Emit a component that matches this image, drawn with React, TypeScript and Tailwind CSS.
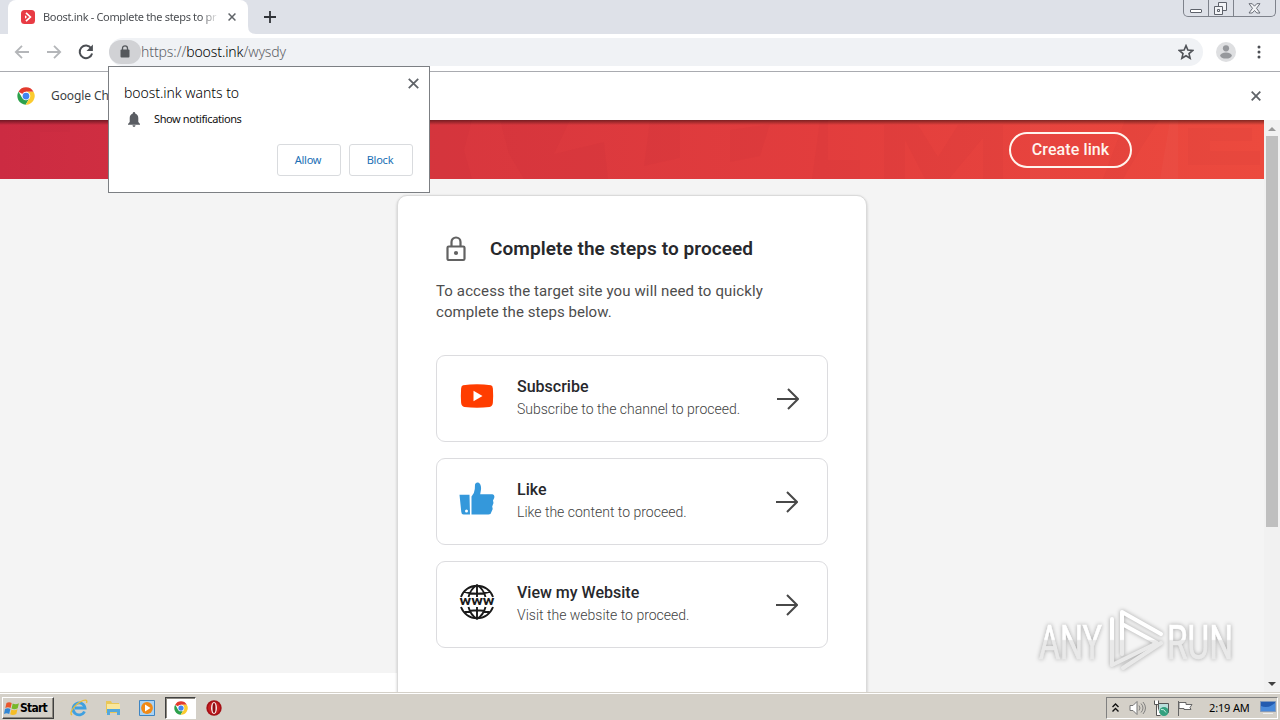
import React from "react";

const ui = "font-['Noto_Sans','Open_Sans',sans-serif]";

function ChromeLogo({ size }: { size: number }) {
  return (
    <svg width={size} height={size} viewBox="0 0 48 48" className="shrink-0">
      <circle cx="24" cy="24" r="23" fill="#fff" />
      <path d="M24 24 L4 12.5 A23 23 0 0 1 44 12.5 L24 12.5Z" fill="#e33b2e" />
      <path d="M4 12.5 A23 23 0 0 0 23 47 L33.5 29.5 L24 24 L14 29Z" fill="#2da14c" />
      <path d="M44 12.5 A23 23 0 0 1 23 47 L34 29 L33 18 L24 12.5Z" fill="#fbcb2f" />
      <circle cx="24" cy="24" r="11.5" fill="#fff" />
      <circle cx="24" cy="24" r="9" fill="#4286f0" />
    </svg>
  );
}

function Cross({ size, color = "#5f6368", width = 2 }: { size: number; color?: string; width?: number }) {
  return (
    <svg width={size} height={size} viewBox="0 0 10 10" stroke={color} strokeWidth={width} className="block shrink-0">
      <path d="M.7 .7 9.3 9.3M9.3 .7 .7 9.3" />
    </svg>
  );
}

function TabStrip() {
  return (
    <div className="flex h-[34px] shrink-0 bg-[#dee1e8]">
      <div className="ml-2 flex h-[34px] w-[240px] items-center rounded-t-lg bg-white pl-[13px]">
        <svg width="14" height="14" viewBox="0 0 14 14" className="shrink-0">
          <rect width="14" height="14" rx="3.5" fill="#e83b44" />
          <path d="M5 2.8 9.4 7 5 11.2" fill="none" stroke="#fff" strokeWidth="1.7" />
          <path d="M4 5.3 6 7 4 8.8Z" fill="#fff" />
        </svg>
        <div className={`${ui} ml-2 w-[176px] shrink-0 whitespace-nowrap text-[11px] leading-4 tracking-[-0.33px] text-[#4b4e52] [mask-image:linear-gradient(to_right,black_158px,transparent_176px)]`}>
          Boost.ink - Complete the steps to pr
        </div>
        <div className="ml-[9px]"><Cross size={8} width={1.9} /></div>
      </div>
      <svg width="8" height="34" viewBox="0 0 8 34" className="shrink-0"><path d="M0 26 Q0 34 8 34 H0Z" fill="#fff" /></svg>
      <svg width="12" height="12" viewBox="0 0 12 12" className="ml-2 mt-[11px] shrink-0"><path d="M6 0V12M0 6H12" stroke="#303338" strokeWidth="1.8" /></svg>
      <div className="ml-auto mr-1 flex h-[17px] w-[93px] rounded-b-[5px] border border-t-0 border-[#7e828b]">
        <div className="flex w-[25px] items-end justify-center border-r border-[#7e828b] pb-[3px]">
          <div className="h-1 w-3 rounded-[1px] border border-[#5e626b] bg-white" />
        </div>
        <div className="flex w-[25px] items-center justify-center border-r border-[#7e828b]">
          <svg width="13" height="13" viewBox="0 0 13 13" fill="#f3f4f7" stroke="#5e626b" className="-ml-0.5"><path d="M4.5 .5h8v8h-8z" /><path d="M.5 4.5h8v8h-8zM3.5 7.5h2v2h-2z" /></svg>
        </div>
        <div className="flex flex-1 items-center justify-center">
          <svg width="13" height="11" viewBox="0 0 13 11" fill="#f3f4f7" stroke="#5e626b" strokeWidth=".9"><path d="M1 .7h3.2l2.3 2.5L8.8.7H12L8.5 5.3 12 10H8.8L6.500 7.500 4.200 10H1l3.500-4.700Z" /></svg>
        </div>
      </div>
    </div>
  );
}

function Toolbar() {
  return (
    <div className="flex h-[38px] shrink-0 items-center border-b border-[#a9abb0] bg-white pb-[2px]">
      <svg width="16" height="14" viewBox="0 0 16 14" fill="none" stroke="#b4b6b9" strokeWidth="1.8" className="ml-[14px]"><path d="M15 7H2M8 .8 1.800 7 8 13.200" /></svg>
      <svg width="16" height="14" viewBox="0 0 16 14" fill="none" stroke="#b4b6b9" strokeWidth="1.8" className="ml-4"><path d="M1 7H14M8 .8 14.200 7 8 13.200" /></svg>
      <svg width="16" height="16" viewBox="0 0 16 16" className="ml-4"><path d="M13.200 4.300A6.300 6.300 0 1 0 14.100 9.500" fill="none" stroke="#4b4e53" strokeWidth="2" /><path d="M14.900 .6V7H8.500Z" fill="#4b4e53" /></svg>
      <div className="ml-[15px] flex h-[28px] w-[1094px] items-center rounded-full bg-[#f0f2f5]">
        <div className="flex h-6 w-8 items-center justify-center rounded-full bg-[#d1d2d5]">
          <svg width="10" height="13" viewBox="0 0 10 13"><path d="M2.500 5V3.300a2.500 2.500 0 0 1 5 0V5" fill="none" stroke="#55585c" strokeWidth="1.300" /><rect x=".5" y="4.500" width="9" height="8" rx="1" fill="#55585c" /></svg>
        </div>
        <div className={`${ui} whitespace-nowrap text-[14px] font-light leading-5 tracking-[-0.1px] text-[#5d6166]`}>
          https://<span className="text-black">boost.ink</span>/wysdy
        </div>
        <svg width="16" height="16" viewBox="0 0 24 24" fill="none" stroke="#505358" strokeWidth="2.400" className="ml-auto mr-[9px]"><path d="m12 2.500 2.800 6.600 7.200.6-5.500 4.700 1.700 7-6.200-3.700-6.200 3.700 1.700-7L2 9.700l7.200-.6Z" /></svg>
      </div>
      <svg width="20" height="20" viewBox="0 0 20 20" className="ml-[13px]"><circle cx="10" cy="10" r="10" fill="#dedfe1" /><circle cx="10" cy="6.300" r="3.100" fill="#96989c" /><ellipse cx="10" cy="13.600" rx="5.800" ry="3" fill="#96989c" /></svg>
      <svg width="4" height="14" viewBox="0 0 4 14" fill="#4c4f54" className="ml-[21px]"><circle cx="2" cy="2" r="1.500" /><circle cx="2" cy="7" r="1.500" /><circle cx="2" cy="12" r="1.500" /></svg>
    </div>
  );
}

function InfoBar() {
  return (
    <div className="flex h-12 shrink-0 items-center bg-white pl-[17px] pr-[19px]">
      <ChromeLogo size={18} />
      <div className={`${ui} ml-4 whitespace-nowrap text-[12px] tracking-[-0.1px] text-[#3c3f43]`}>Google Ch</div>
      <div className="ml-auto"><Cross size={10} width={1.800} /></div>
    </div>
  );
}

function PermissionPopup() {
  const button = "flex h-8 w-16 items-center justify-center rounded-[3px] border border-[#d9dbde] pr-[2px] text-[11px] tracking-[-0.25px] text-[#1a6fb5]";
  return (
    <div className={`${ui} absolute left-[108px] top-[66px] z-10 flex h-[127px] w-[322px] flex-col border border-[#7c7f83] bg-white pl-[15px] pr-4`}>
      <div className="flex items-start justify-between">
        <div className="mt-4 whitespace-nowrap text-[14px] font-light leading-5 tracking-[-0.05px] text-black">boost.ink wants to</div>
        <div className="-mr-[6px] mt-[11px]"><Cross size={11} width={1.600} /></div>
      </div>
      <div className="mt-[7px] flex items-center pl-1">
        <svg width="12" height="15" viewBox="0 0 12 15" fill="#5a5d63"><path d="M6 0c.8 0 1.200.6 1.200 1.400C9.300 2 10.300 3.700 10.300 6v4L12 12v.7H0V12l1.700-2V6c0-2.300 1-4 3.100-4.600C4.800.6 5.200 0 6 0ZM4.500 13.300h3C7.400 14.300 6.800 15 6 15s-1.400-.7-1.500-1.700Z" /></svg>
        <div className="ml-[14px] whitespace-nowrap text-[11px] leading-[18px] tracking-[-0.4px] text-[#111]">Show notifications</div>
      </div>
      <div className="mt-4 flex justify-end gap-2">
        <div className={button}>Allow</div>
        <div className={button}>Block</div>
      </div>
    </div>
  );
}

function Banner() {
  return (
    <div className="relative flex h-[59px] shrink-0 items-center bg-[linear-gradient(90deg,#cc2b42_0%,#d7363e_32%,#e23d3d_65%,#ec4a3e_100%)]">
      <svg width="1264" height="59" viewBox="0 0 1264 59" className="absolute inset-0">
        <g fill="#a91c30" opacity=".055">
          <path d="M430 0h42l-8 30 8 29h-42ZM500 0h70l-16 34 50-12 4 37h-84l-15-25ZM650 0h30v38l-36 8ZM730 10l40-6-10 32-30 6ZM820 0h8v40h32v19h-48ZM884 5h34l20 32L958 5h45v54h-20V18l-34 41h-24l-20-39v39h-21ZM1125 0h34l-18 28-18 31h-20ZM1188 8h64v13h-42v10h50v14h-72ZM20 0h50v12H40v47H20Z" />
        </g>
        <path d="M1030 0h20v59h-20ZM1170 0h8v59h-18Z" fill="#fff" opacity=".025" />
      </svg>
      <div className="absolute inset-x-0 top-0 h-[5px] bg-gradient-to-b from-black/45 to-transparent" />
      <div className="relative ml-[1009px] flex h-9 w-[123px] items-center justify-center rounded-full border-2 border-[#fff5ee] text-[16px] font-medium tracking-[0.1px] text-[#fff5ee]">Create link</div>
    </div>
  );
}

function YoutubeIcon() {
  return <svg width="36" height="36" viewBox="0 0 36 36"><path d="M4 7.300Q18 5.300 32 7.300 33.700 7.700 33.900 10.500 34.400 17.500 33.900 24.500 33.700 28.400 30.500 29 18 30.500 5.500 29 2.300 28.400 2.100 24.500 1.600 17.500 2.100 10.500 2.300 7.700 4 7.300Z" fill="#ff3d00" /><path d="M14.500 12.700V23.200L23.500 18Z" fill="#fff" /></svg>;
}

function LikeIcon() {
  return (
    <svg width="36" height="36" viewBox="0 0 36 36" fill="#3498db">
      <path d="M.5 13.800H10.500L11 33.500H4.500Q2.500 33.500 2.300 31Z" />
      <path d="M12.500 15.500Q15.500 12.500 15.800 8L16 3.500Q16.700 1 19.200 1.500 22.500 3 22 8.500L21.200 13.300H33.500Q36 13.500 35.200 17L34 19.500 34.500 22 33.200 25.500 33.700 28 32.400 31Q32 33.500 29.500 33.500H12.500Z" />
      <circle cx="7.500" cy="30" r="1.500" fill="#fff" />
    </svg>
  );
}

function WebIcon() {
  return (
    <svg width="36" height="36" viewBox="0 0 36 36" fill="none" stroke="#1a1a1a" strokeWidth="1.900">
      <path d="M2 13A17 17 0 0 1 34 13M2 23A17 17 0 0 0 34 23M18 1V13M18 23V35M9.500 13Q11.500 5 18 1 24.500 5 26.500 13M9.500 23Q11.500 31 18 35 24.500 31 26.500 23M4.500 7.500Q18 12 31.500 7.500M4.500 28.500Q18 24 31.500 28.500" />
      <text x="0.500" y="21.300" textLength="35" lengthAdjust="spacingAndGlyphs" fill="#1a1a1a" stroke="none" fontFamily="Roboto, sans-serif" fontWeight="700" fontSize="13">www</text>
    </svg>
  );
}

const steps = [
  { icon: <YoutubeIcon />, title: "Subscribe", text: "Subscribe to the channel to proceed.", inset: "mr-7" },
  { icon: <LikeIcon />, title: "Like", text: "Like the content to proceed.", inset: "mr-[29px]" },
  { icon: <WebIcon />, title: "View my Website", text: "Visit the website to proceed.", inset: "mr-[29px]" },
];

function StepsCard() {
  return (
    <div className="ml-[397px] mt-4 h-[520px] w-[470px] shrink-0 rounded-[10px] border border-[#dadada] bg-white px-[38px] pt-[39px] shadow-[0_1px_3px_rgba(0,0,0,0.2)]">
      <div className="flex h-7 items-center">
        <svg width="22" height="26" viewBox="0 0 22 26" fill="none" stroke="#626262" strokeWidth="2.200" className="ml-[9px] shrink-0"><rect x="2.500" y="10.500" width="17" height="13.500" rx="1.300" /><path d="M6.500 10V6a4.500 4.500 0 0 1 9 0v4" /><circle cx="11" cy="17" r="2.100" fill="#626262" stroke="none" /></svg>
        <div className="ml-[23px] whitespace-nowrap text-[19px] font-semibold tracking-[0.07px] text-[#27282c]">Complete the steps to proceed</div>
      </div>
      <p className="mt-[18px] whitespace-nowrap text-[15px] leading-[21px] tracking-[0.12px] text-[#4d4d4d]">
        To access the target site you will need to quickly<br /><span className="tracking-[0.05px]">complete the steps below.</span>
      </p>
      <div className="mt-[32px] flex flex-col gap-4">
        {steps.map((s) => (
          <div key={s.title} className="flex h-[87px] items-start rounded-[9px] border border-[#dcdcdf] pl-[22px]">
            <div className="mt-[22px] shrink-0">{s.icon}</div>
            <div className="ml-[22px] mt-5 whitespace-nowrap">
              <div className="text-[16px] font-medium leading-[22px] text-[#27282c]">{s.title}</div>
              <div className="text-[14px] font-light leading-[23px] text-[#424242]">{s.text}</div>
            </div>
            <svg width="22" height="22" viewBox="0 0 22 22" fill="none" stroke="#484848" strokeWidth="2" className={`ml-auto mt-8 shrink-0 ${s.inset}`}><path d="M0 11H20.500M11 1 21 11 11 21" /></svg>
          </div>
        ))}
      </div>
    </div>
  );
}

function Watermark() {
  return (
    <svg width="220" height="80" viewBox="0 0 220 80" className="absolute left-[1036px] top-[605px] overflow-visible [filter:drop-shadow(0_0_2px_rgba(0,0,0,0.32))]">
      <defs><linearGradient id="fade" x1="0" y1="0" x2="0" y2="70" gradientUnits="userSpaceOnUse"><stop offset=".49" stopColor="#fff" /><stop offset=".51" stopColor="#e9e9e9" /></linearGradient></defs>
      <g fill="url(#fade)" stroke="url(#fade)" strokeWidth=".7" fontFamily="Roboto, sans-serif" fontSize="48">
        <text x="3" y="54" textLength="63" lengthAdjust="spacingAndGlyphs">ANY</text>
        <text x="131" y="54" textLength="66" lengthAdjust="spacingAndGlyphs">RUN</text>
      </g>
      <g fill="none" stroke="url(#fade)" strokeWidth="4" strokeLinejoin="round" strokeLinecap="round">
        <path d="M86 49V7L125 29" /><path d="M86 19 121 38 76 60V14" /><path d="M125 38 87 63" />
      </g>
    </svg>
  );
}

function Scrollbar() {
  return (
    <div className="flex w-4 shrink-0 flex-col items-center bg-[#f1f1f1] pb-[7px] pt-[7px]">
      <svg width="8" height="4" viewBox="0 0 8 4"><path d="M0 4 4 0 8 4Z" fill="#999" /></svg>
      <div className="mt-[5px] h-[391px] w-3 bg-[#bfbfbf]" />
      <svg width="8" height="4" viewBox="0 0 8 4" className="mt-auto"><path d="M0 0 4 4 8 0Z" fill="#404040" /></svg>
    </div>
  );
}

function Taskbar() {
  return (
    <div className="flex h-7 shrink-0 items-start border-t border-white bg-[#d4d0c8] pt-[3px] shadow-[0_-1px_0_#d4d0c8]">
      <div className="ml-[2px] flex h-[22px] w-[52px] items-center border border-b-[#404040] border-l-white border-r-[#404040] border-t-white shadow-[inset_-1px_-1px_0_#8c8880]">
        <svg width="16" height="15" viewBox="0 0 16 15" className="ml-[1px] shrink-0"><path d="M2.500 2Q5 .5 7.700 2L6.600 7Q4 5.500 1.300 7Z" fill="#e9562c" /><path d="M8.700 2.500Q11.500 4 14.900 2.300L13.700 7.200Q10.500 9 7.600 7.500Z" fill="#77b82b" /><path d="M1 8Q3.700 6.500 6.400 8L5.200 13Q2.500 11.500 0 13Z" fill="#3287d5" /><path d="M7.400 8.500Q10 10 13.500 8.300L12.300 13Q9 14.800 6.200 13.300Z" fill="#f6bd26" /></svg>
        <div className="font-['DejaVu_Sans_Condensed','DejaVu_Sans',sans-serif] text-[12px] font-bold tracking-[-0.75px] text-black [font-stretch:condensed]">Start</div>
      </div>
      <svg width="18" height="18" viewBox="0 0 18 18" className="ml-[16px] mt-[2px]"><path d="M14.500 12.500A6 6 0 1 1 15 9H5" fill="none" stroke="#3fa0e0" strokeWidth="2.800" /><path d="M2 16Q-.5 14.500 3 9.500 7 4 13 1.500 18 0 16.500 4" fill="none" stroke="#e9bc38" strokeWidth="1.300" /></svg>
      <svg width="16" height="16" viewBox="0 0 16 16" className="ml-[17px] mt-[3px]"><path d="M1 1h5l1 2h7v10H1Z" fill="#e9c758" /><path d="M2 4h13v7H2Z" fill="#fae79b" /><path d="M2 15V9h13v6h-3v-3H5v3Z" fill="#54a8dc" /></svg>
      <svg width="16" height="16" viewBox="0 0 16 16" className="ml-[18px] mt-[3px]"><path d="M.5.5h15v15H.5Z" fill="#a9d3f5" stroke="#3e85c2" /><circle cx="8" cy="8" r="5.900" fill="#f18a16" /><path d="M6 4.500V11.500L11.500 8Z" fill="#fff" /></svg>
      <div className="ml-[10px] flex h-[22px] w-[31px] items-center justify-center border border-b-white border-l-[#404040] border-r-white border-t-[#404040] bg-white shadow-[inset_1px_1px_0_#8c8880]"><ChromeLogo size={14} /></div>
      <svg width="16" height="16" viewBox="0 0 16 16" className="ml-[10px] mt-[3px]"><circle cx="8" cy="8" r="7.700" fill="#a51016" /><circle cx="8" cy="8" r="6" fill="#c61f22" /><ellipse cx="8" cy="8" rx="3" ry="6" fill="#f7e9e8" /><ellipse cx="8" cy="8" rx="1.500" ry="5" fill="#8d0b12" /></svg>
      <div className="ml-auto mr-[2px] flex h-[22px] w-[172px] items-center border border-b-white border-l-[#808080] border-r-white border-t-[#808080] pl-[5px]">
        <svg width="7" height="10" viewBox="0 0 7 10" fill="none" stroke="#111" strokeWidth="1.400"><path d="M.5 4 3.500 1 6.500 4M.5 8.500 3.500 5.500 6.500 8.500" /></svg>
        <svg width="17" height="16" viewBox="0 0 17 16" className="ml-[10px]"><path d="M1 5.500h3L8 1.500v13L4 10.500H1Z" fill="#fff" stroke="#777" /><path d="M10 5.500q2 2.500 0 5M12 3.500q4 4.500 0 9M14 2q5 6 0 12" fill="none" stroke="#777" strokeWidth=".9" /></svg>
        <svg width="17" height="17" viewBox="0 0 17 17" className="ml-[7px]"><path d="M5.500 3.500h10v9h-10Z" fill="#b9dedb" stroke="#555" /><path d="M1.500.5v4h4v-4M3.500 4.500v11h4" fill="#fff" stroke="#555" /><circle cx="11" cy="11.500" r="4.500" fill="#34a17f" /><path d="M8 9.500q3-1 5 3" fill="none" stroke="#c6eee2" /></svg>
        <svg width="16" height="16" viewBox="0 0 16 16" className="ml-[7px]"><path d="M1.500 1v15M2 2.500h7v2h6l-2 3 1 2H7v-1H2Z" fill="#fff" stroke="#666" /></svg>
        <div className={`${ui} ml-4 whitespace-nowrap text-[11px] tracking-[-0.15px] text-black`}>2:19 AM</div>
        <svg width="16" height="14" viewBox="0 0 16 14" className="ml-auto mr-[1px]"><path d="M.5.500h15v10H.5Z" fill="#235bb0" stroke="#8198ba" /><path d="M1 5Q8 8 15 2V10H1Z" fill="#4a8ada" /><path d="M3 12.500h10" stroke="#eee" /></svg>
      </div>
    </div>
  );
}

export default function App() {
  return (
    <div className="relative flex h-[720px] w-[1280px] flex-col overflow-hidden bg-white font-['Roboto',sans-serif]">
      <TabStrip />
      <Toolbar />
      <InfoBar />
      <div className="flex h-[573px] shrink-0 overflow-hidden">
        <div className="flex w-[1264px] flex-col overflow-hidden bg-[linear-gradient(90deg,#fff_397px,#f4f4f4_397px)]">
          <Banner />
          <div className="flex h-[514px] flex-col overflow-hidden bg-[linear-gradient(#f4f4f4_494px,transparent_494px)]">
            <StepsCard />
          </div>
        </div>
        <Scrollbar />
      </div>
      <Taskbar />
      <Watermark />
      <PermissionPopup />
    </div>
  );
}
